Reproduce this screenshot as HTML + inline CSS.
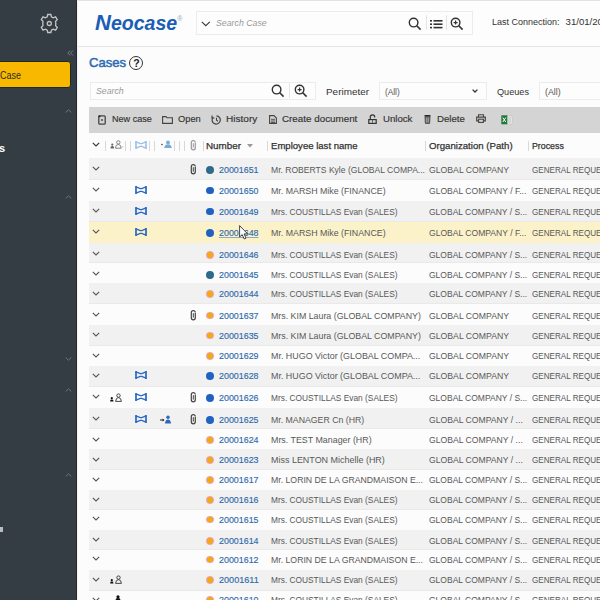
<!DOCTYPE html>
<html><head><meta charset="utf-8">
<style>
*{margin:0;padding:0;box-sizing:border-box}
html,body{width:600px;height:600px;overflow:hidden;background:#fcfcfc;font-family:"Liberation Sans",sans-serif}
#side{position:absolute;left:0;top:0;width:77px;height:600px;background:#353d44;overflow:hidden}
#topbar{position:absolute;left:78px;top:0;width:522px;height:47px;background:#fdfdfd;border-top:1px solid #e2e2e2;border-bottom:1px solid #e4e4e4}
.t{position:absolute;white-space:nowrap;line-height:1;transform-origin:0 0}
.row{position:absolute;left:89px;width:511px}
.rg{background:#f1f1f1;border-bottom:1px solid #e9e9e9}
.rw{background:#fcfcfc}
.ry{background:#fcf2ca}
.ic{position:absolute}
.dot{position:absolute;left:206.4px;width:7.8px;height:7.8px;border-radius:50%}
</style></head><body>
<div id="side">
<svg style="position:absolute;left:39px;top:13px" width="21" height="21" viewBox="0 0 21 21"><g transform="translate(10.3,10.5)" fill="none" stroke="#c4c4c4" stroke-width="1.3">
<path d="M-1.6,-9 L1.6,-9 L2.1,-6.6 L3.9,-5.6 L6.3,-6.6 L8,-3.9 L6.3,-2.2 L6.5,0 L6.3,2.2 L8,3.9 L6.3,6.6 L3.9,5.6 L2.1,6.6 L1.6,9 L-1.6,9 L-2.1,6.6 L-3.9,5.6 L-6.3,6.6 L-8,3.9 L-6.3,2.2 L-6.5,0 L-6.3,-2.2 L-8,-3.9 L-6.3,-6.6 L-3.9,-5.6 L-2.1,-6.6 Z"/>
<circle r="2"/></g></svg>
<svg style="position:absolute;left:67px;top:50px" width="7" height="6" viewBox="0 0 7 6"><path d="M3.2 0.5 L0.8 3 L3.2 5.5 M6 0.5 L3.6 3 L6 5.5" fill="none" stroke="#7d868c" stroke-width="0.9"/></svg>
<div style="position:absolute;left:76px;top:0;width:1px;height:600px;background:#252c31"></div>
<div style="position:absolute;left:-4px;top:61px;width:75px;height:26.5px;background:#f8b800;border:1px solid #1e2a22;border-radius:3px"></div>
<div id="sCase" class="t" style="left:0px;top:69.77px;font-size:11.5px;color:#2a2a2a;transform:scaleX(0.7778);">Case</div>
<svg style="position:absolute;left:65px;top:109px" width="7" height="4" viewBox="0 0 7 4"><path d="M0.7 3.5 L3.5 0.8 L6.3 3.5" fill="none" stroke="#6f777d" stroke-width="1"/></svg>
<div id="sS" class="t" style="left:-1px;top:142.69px;font-size:11px;color:#fff;font-weight:bold">s</div>
<svg style="position:absolute;left:65px;top:195px" width="7" height="4" viewBox="0 0 7 4"><path d="M0.7 3.5 L3.5 0.8 L6.3 3.5" fill="none" stroke="#6f777d" stroke-width="1"/></svg>
<svg style="position:absolute;left:65px;top:357px" width="7" height="4" viewBox="0 0 7 4"><path d="M0.7 0.5 L3.5 3.2 L6.3 0.5" fill="none" stroke="#6f777d" stroke-width="1"/></svg>
<svg style="position:absolute;left:65px;top:388px" width="7" height="4" viewBox="0 0 7 4"><path d="M0.7 3.5 L3.5 0.8 L6.3 3.5" fill="none" stroke="#6f777d" stroke-width="1"/></svg>
<svg style="position:absolute;left:65px;top:473px" width="7" height="4" viewBox="0 0 7 4"><path d="M0.7 3.5 L3.5 0.8 L6.3 3.5" fill="none" stroke="#6f777d" stroke-width="1"/></svg>
<div style="position:absolute;left:0;top:527px;width:3px;height:5px;background:#bbb"></div>
</div>
<div style="position:absolute;left:77px;top:0;width:1px;height:600px;background:#f0f0f0"></div>
<div id="topbar"></div>
<div id="logo" class="t" style="left:94.5px;top:12.09px;font-size:19.5px;color:#1b5eb5;transform:scaleX(1.0024);font-weight:bold;font-style:italic"><span style="font-size:22px">N</span>eocase</div>
<div id="reg" class="t" style="left:177.3px;top:14.57px;font-size:7px;color:#8aa8c8;">®</div>
<div style="position:absolute;left:195.5px;top:11px;width:277px;height:24px;border:1px solid #ececec;background:#fdfdfd"></div>
<svg style="position:absolute;left:201px;top:20.5px" width="10" height="6" viewBox="0 0 10 6"><path d="M0.8 0.8 L4.8 4.6 L8.8 0.8" fill="none" stroke="#3a3a3a" stroke-width="1.15"/></svg>
<div id="scase" class="t" style="left:215.7px;top:19.08px;font-size:9px;color:#999;transform:scaleX(0.9731);font-style:italic">Search Case</div>
<svg style="position:absolute;left:408px;top:17px" width="14" height="14" viewBox="0 0 14 14"><circle cx="5.6" cy="5.6" r="4.3" fill="none" stroke="#333" stroke-width="1.4"/><path d="M8.8 8.8 L12.6 12.6" stroke="#333" stroke-width="1.6"/></svg>
<div style="position:absolute;left:425.5px;top:15px;width:1px;height:15px;background:#e4e4e4"></div>
<svg style="position:absolute;left:430px;top:18.5px" width="13" height="10" viewBox="0 0 13 10"><g fill="#333"><rect x="0" y="1" width="2" height="1.6"/><rect x="0" y="4.4" width="2" height="1.6"/><rect x="0" y="7.8" width="2" height="1.6"/><rect x="3.5" y="1" width="9" height="1.6"/><rect x="3.5" y="4.4" width="9" height="1.6"/><rect x="3.5" y="7.8" width="9" height="1.6"/></g></svg>
<div style="position:absolute;left:445.5px;top:15px;width:1px;height:15px;background:#e4e4e4"></div>
<svg style="position:absolute;left:450px;top:17px" width="14" height="14" viewBox="0 0 14 14"><circle cx="5.6" cy="5.6" r="4.3" fill="none" stroke="#333" stroke-width="1.4"/><path d="M8.8 8.8 L12.6 12.6" stroke="#333" stroke-width="1.6"/><path d="M5.6 3.6 V7.6 M3.6 5.6 H7.6" stroke="#333" stroke-width="1.2"/></svg>
<div id="lastc" class="t" style="left:491.6px;top:16.77px;font-size:9.6px;color:#333;transform:scaleX(0.9361);">Last Connection:</div>
<div id="date" class="t" style="left:565.6px;top:16.77px;font-size:9.6px;color:#333;">31/01/2019 10:20</div>
<div id="cases" class="t" style="left:89.1px;top:57.16px;font-size:12.8px;color:#2d6cb4;transform:scaleX(1.0250);-webkit-text-stroke:0.5px #2d6cb4">Cases</div>
<div style="position:absolute;left:129.4px;top:56px;width:14px;height:14px;border:1px solid #333;border-radius:50%"></div>
<div id="q" class="t" style="left:133.3px;top:58.11px;font-size:10.5px;color:#222;font-weight:bold">?</div>
<div style="position:absolute;left:89.5px;top:81.5px;width:226px;height:18.5px;border:1px solid #ececec;background:#fdfdfd"></div>
<div id="srch" class="t" style="left:96px;top:87.38px;font-size:9px;color:#999;transform:scaleX(0.9724);font-style:italic">Search</div>
<svg style="position:absolute;left:271px;top:84px" width="14" height="14" viewBox="0 0 14 14"><circle cx="5.6" cy="5.6" r="4.3" fill="none" stroke="#333" stroke-width="1.4"/><path d="M8.8 8.8 L12.6 12.6" stroke="#333" stroke-width="1.6"/></svg>
<div style="position:absolute;left:289.0px;top:83px;width:1px;height:15px;background:#e4e4e4"></div>
<svg style="position:absolute;left:294px;top:84px" width="14" height="14" viewBox="0 0 14 14"><circle cx="5.6" cy="5.6" r="4.3" fill="none" stroke="#333" stroke-width="1.4"/><path d="M8.8 8.8 L12.6 12.6" stroke="#333" stroke-width="1.6"/><path d="M5.6 3.6 V7.6 M3.6 5.6 H7.6" stroke="#333" stroke-width="1.2"/></svg>
<div id="perim" class="t" style="left:326px;top:88.13px;font-size:9.3px;color:#333;transform:scaleX(1.0675);">Perimeter</div>
<div style="position:absolute;left:379px;top:81.5px;width:107.5px;height:18px;border:1px solid #ececec;background:#fdfdfd"></div>
<div id="all1" class="t" style="left:384.8px;top:87.88px;font-size:9px;color:#555;transform:scaleX(0.9187);">(All)</div>
<svg style="position:absolute;left:472px;top:88.5px" width="6" height="4" viewBox="0 0 6 4"><path d="M0.6 0.6 L3 3 L5.4 0.6" fill="none" stroke="#333" stroke-width="1.3"/></svg>
<div id="queues" class="t" style="left:496.8px;top:88.13px;font-size:9.3px;color:#333;transform:scaleX(0.9818);">Queues</div>
<div style="position:absolute;left:539.3px;top:81.5px;width:70px;height:18px;border:1px solid #ececec;background:#fdfdfd"></div>
<div id="all2" class="t" style="left:545px;top:87.88px;font-size:9px;color:#555;transform:scaleX(0.9813);">(All)</div>
<div style="position:absolute;left:89px;top:107.2px;width:511px;height:26.1px;background:#d4d4d4"></div>
<svg style="position:absolute;left:98px;top:114.5px" width="8" height="10" viewBox="0 0 8 10"><rect x="0.8" y="0.8" width="6.4" height="8.4" rx="1" fill="none" stroke="#444" stroke-width="1.3"/><circle cx="4" cy="5" r="1.1" fill="#555"/><rect x="0.5" y="0.5" width="2" height="1.6" fill="#222"/></svg>
<div id="tb1" class="t" style="left:112px;top:115.43px;font-size:9.3px;color:#333;transform:scaleX(0.9756);-webkit-text-stroke:0.15px #333">New case</div>
<svg style="position:absolute;left:162px;top:115.5px" width="11" height="8" viewBox="0 0 11 8"><path d="M0.6 0.6 H4 L5 1.8 H10.4 V7.4 H0.6 Z" fill="none" stroke="#444" stroke-width="1.1"/></svg>
<div id="tb2" class="t" style="left:178px;top:115.43px;font-size:9.3px;color:#333;-webkit-text-stroke:0.15px #333">Open</div>
<svg style="position:absolute;left:210.5px;top:114.5px" width="11" height="10" viewBox="0 0 11 10"><path d="M2.2 2.2 A4.1 4.1 0 1 0 5.5 0.9" fill="none" stroke="#444" stroke-width="1.2"/><path d="M5.5 2.8 V5.2 L7 6.2" fill="none" stroke="#444" stroke-width="1.1"/><path d="M1 0.5 V3 H3.4" fill="none" stroke="#444" stroke-width="1.1"/></svg>
<div id="tb3" class="t" style="left:226px;top:115.43px;font-size:9.3px;color:#333;transform:scaleX(1.0828);-webkit-text-stroke:0.15px #333">History</div>
<svg style="position:absolute;left:268.5px;top:115px" width="8" height="9" viewBox="0 0 8 9"><path d="M0.6 0.6 H5 L7.4 3 V8.4 H0.6 Z" fill="none" stroke="#444" stroke-width="1.1"/><path d="M2 4.3 H6 M2 6 H6 M2 7.6 H6" stroke="#444" stroke-width="0.9"/></svg>
<div id="tb4" class="t" style="left:282px;top:115.43px;font-size:9.3px;color:#333;transform:scaleX(1.0563);-webkit-text-stroke:0.15px #333">Create document</div>
<svg style="position:absolute;left:368.3px;top:113.8px" width="9" height="10" viewBox="0 0 9 10"><path d="M2.3 5.6 V3 A2.2 2.2 0 0 1 6.7 3 V3.6" fill="none" stroke="#333" stroke-width="1.2"/><rect x="0.8" y="5.6" width="7.4" height="3.8" fill="none" stroke="#333" stroke-width="1.2"/><path d="M4.5 6.2 V8.8" stroke="#444" stroke-width="0.8"/></svg>
<div id="tb5" class="t" style="left:383px;top:115.43px;font-size:9.3px;color:#333;transform:scaleX(1.0357);-webkit-text-stroke:0.15px #333">Unlock</div>
<svg style="position:absolute;left:424.3px;top:114.8px" width="7" height="9" viewBox="0 0 7 9"><path d="M0.4 1 Q3.5 0 6.6 1" fill="none" stroke="#222" stroke-width="1.3"/><path d="M1 1.6 H6 L5.7 8 Q5.6 8.7 5 8.7 H2 Q1.4 8.7 1.3 8 Z" fill="#666" stroke="#444" stroke-width="0.8"/><path d="M2.7 2.6 V7.6 M4.3 2.6 V7.6" stroke="#ccc" stroke-width="0.6"/></svg>
<div id="tb6" class="t" style="left:437px;top:115.43px;font-size:9.3px;color:#333;transform:scaleX(1.0370);-webkit-text-stroke:0.15px #333">Delete</div>
<svg style="position:absolute;left:475.5px;top:114.3px" width="10" height="9" viewBox="0 0 10 9"><path d="M2.5 3 V0.7 H7.5 V3" fill="none" stroke="#444" stroke-width="1.1"/><path d="M2.2 6.8 H0.7 V3.2 H9.3 V6.8 H7.8" fill="none" stroke="#444" stroke-width="1.2"/><rect x="2.6" y="5.2" width="4.8" height="3.2" fill="none" stroke="#444" stroke-width="1.1"/></svg>
<svg style="position:absolute;left:500.5px;top:114.5px" width="12" height="10" viewBox="0 0 12 10"><rect x="6" y="1" width="5" height="8" fill="#f2f2f2" stroke="#bbb" stroke-width="0.6"/><path d="M7 3 H10 M7 5 H10 M7 7 H10" stroke="#9a9" stroke-width="0.7"/><rect x="0.3" y="0.3" width="6" height="9" fill="#1d7a38"/><path d="M1.8 2.6 L4.8 7 M4.8 2.6 L1.8 7" stroke="#fff" stroke-width="1"/></svg>
<div style="position:absolute;left:89px;top:133.3px;width:511px;height:25px;background:#fcfcfc"></div>
<svg class="ic" style="left:92px;top:142px" width="8" height="5" viewBox="0 0 8 5"><path d="M0.8 0.8 L4 4 L7.2 0.8" fill="none" stroke="#333" stroke-width="1.1"/></svg>
<div style="position:absolute;left:105.0px;top:141px;width:1px;height:9.5px;background:#d8d8d8"></div>
<svg style="position:absolute;left:109.5px;top:139.5px" width="14" height="9" viewBox="0 0 14 9"><circle cx="2.3" cy="4.6" r="1.1" fill="#666"/><path d="M0.6 8.4 V7.4 Q0.6 6 2.3 6 Q4 6 4 7.4 V8.4 Z" fill="#666"/><circle cx="8.3" cy="2.4" r="1.7" fill="none" stroke="#777" stroke-width="0.9"/><path d="M5.4 8.2 Q5.6 4.6 8.3 4.4 Q11 4.6 11.2 8.2 Z" fill="none" stroke="#777" stroke-width="0.9"/><circle cx="12.8" cy="6.8" r="0.5" fill="#999"/></svg>
<div style="position:absolute;left:125.0px;top:141px;width:1px;height:9.5px;background:#d8d8d8"></div>
<div style="position:absolute;left:129.5px;top:141px;width:1px;height:9.5px;background:#d8d8d8"></div>
<svg class="ic" style="left:135px;top:140.5px" width="12" height="8" viewBox="0 0 12 8"><path d="M1 0.9 L5.3 2.6 H6.7 L11 0.9 M1 7.1 L5.3 5.4 H6.7 L11 7.1" fill="none" stroke="#9ac0e8" stroke-width="1.2" stroke-linejoin="round" stroke-linecap="round"/><path d="M1 0.7 V7.3 M11 0.7 V7.3" stroke="#9ac0e8" stroke-width="1.6" stroke-linecap="round"/></svg>
<div style="position:absolute;left:149.0px;top:141px;width:1px;height:9.5px;background:#d8d8d8"></div>
<div style="position:absolute;left:154.3px;top:141px;width:1px;height:9.5px;background:#d8d8d8"></div>
<svg style="position:absolute;left:160px;top:140px" width="12" height="9" viewBox="0 0 12 9"><circle cx="2" cy="4.5" r="0.8" fill="#444"/><circle cx="8" cy="2.4" r="1.9" fill="#7aaad8"/><path d="M4.2 8 Q4.6 4.6 8 4.3 Q11.4 4.6 11.8 8 Z" fill="#7aaad8"/></svg>
<div style="position:absolute;left:173.5px;top:141px;width:1px;height:9.5px;background:#d8d8d8"></div>
<div style="position:absolute;left:178.5px;top:141px;width:1px;height:9.5px;background:#d8d8d8"></div>
<div style="position:absolute;left:183.5px;top:141px;width:1px;height:9.5px;background:#d8d8d8"></div>
<svg class="ic" style="left:189.8px;top:139.5px" width="7" height="11" viewBox="0 0 7 11"><path d="M5.3 3 V7.8 A2 2 0 0 1 1.3 7.8 V2.6 A2 2 0 0 1 5.3 2.6" fill="none" stroke="#999" stroke-width="1.2"/><path d="M3.3 3.2 V7.6" stroke="#999" stroke-width="1"/></svg>
<div style="position:absolute;left:202.5px;top:141px;width:1px;height:9.5px;background:#d8d8d8"></div>
<div id="h1" class="t" style="left:206px;top:141.93px;font-size:9.3px;color:#333;transform:scaleX(1.0606);-webkit-text-stroke:0.25px #333">Number</div>
<svg style="position:absolute;left:247.4px;top:144px" width="6" height="4" viewBox="0 0 6 4"><path d="M0 0 H6 L3 3.5 Z" fill="#999"/></svg>
<div style="position:absolute;left:266.9px;top:141px;width:1px;height:9.5px;background:#d8d8d8"></div>
<div id="h2" class="t" style="left:271.2px;top:141.93px;font-size:9.3px;color:#333;transform:scaleX(1.0286);-webkit-text-stroke:0.25px #333">Employee last name</div>
<div style="position:absolute;left:425.2px;top:141px;width:1px;height:9.5px;background:#d8d8d8"></div>
<div id="h3" class="t" style="left:429.3px;top:141.93px;font-size:9.3px;color:#333;transform:scaleX(1.0370);-webkit-text-stroke:0.25px #333">Organization (Path)</div>
<div style="position:absolute;left:527.8px;top:141px;width:1px;height:9.5px;background:#d8d8d8"></div>
<div id="h4" class="t" style="left:532px;top:141.93px;font-size:9.3px;color:#333;transform:scaleX(0.9471);-webkit-text-stroke:0.25px #333">Process</div>
<div class="row rg" style="top:158.3px;height:21.30px"></div>
<svg class="ic" style="left:92px;top:166.2px" width="8" height="5" viewBox="0 0 8 5"><path d="M0.8 0.8 L4 4 L7.2 0.8" fill="none" stroke="#555" stroke-width="1.1"/></svg>
<svg class="ic" style="left:190px;top:163.9px" width="7" height="11" viewBox="0 0 7 11"><path d="M5.3 3 V7.8 A2 2 0 0 1 1.3 7.8 V2.6 A2 2 0 0 1 5.3 2.6" fill="none" stroke="#444" stroke-width="1.2"/><path d="M3.3 3.2 V7.6" stroke="#444" stroke-width="1"/></svg>
<span class="dot" style="top:165.80px;background:#2f6a8c"></span>
<div id="n0" class="t" style="left:218.7px;top:164.80px;font-size:9.8px;color:#2f6aaa;transform:scaleX(0.9068);-webkit-text-stroke:0.15px #2f6aaa">20001651</div>
<div id="m0" class="t" style="left:271.2px;top:164.80px;font-size:9.8px;color:#585858;transform:scaleX(0.8739);">Mr. ROBERTS Kyle (GLOBAL COMPA...</div>
<div id="o0" class="t" style="left:429.3px;top:164.80px;font-size:9.8px;color:#585858;transform:scaleX(0.8856);">GLOBAL COMPANY</div>
<div id="p0" class="t" style="left:532.3px;top:164.80px;font-size:9.8px;color:#585858;transform:scaleX(0.8262);">GENERAL REQUE</div>
<div class="row rw" style="top:179.6px;height:21.10px"></div>
<svg class="ic" style="left:92px;top:187.0px" width="8" height="5" viewBox="0 0 8 5"><path d="M0.8 0.8 L4 4 L7.2 0.8" fill="none" stroke="#555" stroke-width="1.1"/></svg>
<svg class="ic" style="left:135px;top:185.5px" width="12" height="8" viewBox="0 0 12 8"><path d="M1 0.9 L5.3 2.6 H6.7 L11 0.9 M1 7.1 L5.3 5.4 H6.7 L11 7.1" fill="none" stroke="#2a68c0" stroke-width="1.3" stroke-linejoin="round" stroke-linecap="round"/><path d="M1 0.7 V7.3 M11 0.7 V7.3" stroke="#2a68c0" stroke-width="1.7000000000000002" stroke-linecap="round"/></svg>
<span class="dot" style="top:186.60px;background:#1f62c2"></span>
<div id="n1" class="t" style="left:218.7px;top:185.60px;font-size:9.8px;color:#2f6aaa;transform:scaleX(0.9068);-webkit-text-stroke:0.15px #2f6aaa">20001650</div>
<div id="m1" class="t" style="left:271.2px;top:185.60px;font-size:9.8px;color:#585858;transform:scaleX(0.9000);">Mr. MARSH Mike (FINANCE)</div>
<div id="o1" class="t" style="left:429.3px;top:185.60px;font-size:9.8px;color:#585858;transform:scaleX(0.8739);">GLOBAL COMPANY / F...</div>
<div id="p1" class="t" style="left:532.3px;top:185.60px;font-size:9.8px;color:#585858;transform:scaleX(0.8262);">GENERAL REQUE</div>
<div class="row rg" style="top:200.7px;height:21.30px"></div>
<svg class="ic" style="left:92px;top:208.0px" width="8" height="5" viewBox="0 0 8 5"><path d="M0.8 0.8 L4 4 L7.2 0.8" fill="none" stroke="#555" stroke-width="1.1"/></svg>
<svg class="ic" style="left:135px;top:206.5px" width="12" height="8" viewBox="0 0 12 8"><path d="M1 0.9 L5.3 2.6 H6.7 L11 0.9 M1 7.1 L5.3 5.4 H6.7 L11 7.1" fill="none" stroke="#2a68c0" stroke-width="1.3" stroke-linejoin="round" stroke-linecap="round"/><path d="M1 0.7 V7.3 M11 0.7 V7.3" stroke="#2a68c0" stroke-width="1.7000000000000002" stroke-linecap="round"/></svg>
<span class="dot" style="top:207.60px;background:#1f62c2"></span>
<div id="n2" class="t" style="left:218.7px;top:206.60px;font-size:9.8px;color:#2f6aaa;transform:scaleX(0.9068);-webkit-text-stroke:0.15px #2f6aaa">20001649</div>
<div id="m2" class="t" style="left:271.2px;top:206.60px;font-size:9.8px;color:#585858;transform:scaleX(0.8510);">Mrs. COUSTILLAS Evan (SALES)</div>
<div id="o2" class="t" style="left:429.3px;top:206.60px;font-size:9.8px;color:#585858;transform:scaleX(0.8681);">GLOBAL COMPANY / S...</div>
<div id="p2" class="t" style="left:532.3px;top:206.60px;font-size:9.8px;color:#585858;transform:scaleX(0.8262);">GENERAL REQUE</div>
<div class="row ry" style="top:222px;height:21.00px"></div>
<svg class="ic" style="left:92px;top:229.3px" width="8" height="5" viewBox="0 0 8 5"><path d="M0.8 0.8 L4 4 L7.2 0.8" fill="none" stroke="#555" stroke-width="1.1"/></svg>
<svg class="ic" style="left:135px;top:227.8px" width="12" height="8" viewBox="0 0 12 8"><path d="M1 0.9 L5.3 2.6 H6.7 L11 0.9 M1 7.1 L5.3 5.4 H6.7 L11 7.1" fill="none" stroke="#2a68c0" stroke-width="1.3" stroke-linejoin="round" stroke-linecap="round"/><path d="M1 0.7 V7.3 M11 0.7 V7.3" stroke="#2a68c0" stroke-width="1.7000000000000002" stroke-linecap="round"/></svg>
<span class="dot" style="top:228.90px;background:#1f62c2"></span>
<div id="n3" class="t" style="left:218.7px;top:227.90px;font-size:9.8px;color:#2f6aaa;transform:scaleX(0.9068);text-decoration:underline;text-decoration-color:#8aa8cc;-webkit-text-stroke:0.15px #2f6aaa">20001648</div>
<div id="m3" class="t" style="left:271.2px;top:227.90px;font-size:9.8px;color:#585858;transform:scaleX(0.9000);">Mr. MARSH Mike (FINANCE)</div>
<div id="o3" class="t" style="left:429.3px;top:227.90px;font-size:9.8px;color:#585858;transform:scaleX(0.8739);">GLOBAL COMPANY / F...</div>
<div id="p3" class="t" style="left:532.3px;top:227.90px;font-size:9.8px;color:#585858;transform:scaleX(0.8262);">GENERAL REQUE</div>
<div class="row rg" style="top:243px;height:20.10px"></div>
<svg class="ic" style="left:92px;top:251.3px" width="8" height="5" viewBox="0 0 8 5"><path d="M0.8 0.8 L4 4 L7.2 0.8" fill="none" stroke="#555" stroke-width="1.1"/></svg>
<span class="dot" style="top:250.90px;background:radial-gradient(closest-side,#f6ac00 0,#f4aa10 55%,#e99a80 78%,#f0b8c0 100%)"></span>
<div id="n4" class="t" style="left:218.7px;top:249.90px;font-size:9.8px;color:#2f6aaa;transform:scaleX(0.9068);-webkit-text-stroke:0.15px #2f6aaa">20001646</div>
<div id="m4" class="t" style="left:271.2px;top:249.90px;font-size:9.8px;color:#585858;transform:scaleX(0.8510);">Mrs. COUSTILLAS Evan (SALES)</div>
<div id="o4" class="t" style="left:429.3px;top:249.90px;font-size:9.8px;color:#585858;transform:scaleX(0.8681);">GLOBAL COMPANY / S...</div>
<div id="p4" class="t" style="left:532.3px;top:249.90px;font-size:9.8px;color:#585858;transform:scaleX(0.8262);">GENERAL REQUE</div>
<div class="row rw" style="top:263.1px;height:20.20px"></div>
<svg class="ic" style="left:92px;top:271.3px" width="8" height="5" viewBox="0 0 8 5"><path d="M0.8 0.8 L4 4 L7.2 0.8" fill="none" stroke="#555" stroke-width="1.1"/></svg>
<span class="dot" style="top:270.90px;background:#2f6a8c"></span>
<div id="n5" class="t" style="left:218.7px;top:269.90px;font-size:9.8px;color:#2f6aaa;transform:scaleX(0.9068);-webkit-text-stroke:0.15px #2f6aaa">20001645</div>
<div id="m5" class="t" style="left:271.2px;top:269.90px;font-size:9.8px;color:#585858;transform:scaleX(0.8510);">Mrs. COUSTILLAS Evan (SALES)</div>
<div id="o5" class="t" style="left:429.3px;top:269.90px;font-size:9.8px;color:#585858;transform:scaleX(0.8681);">GLOBAL COMPANY / S...</div>
<div id="p5" class="t" style="left:532.3px;top:269.90px;font-size:9.8px;color:#585858;transform:scaleX(0.8262);">GENERAL REQUE</div>
<div class="row rg" style="top:283.3px;height:21.10px"></div>
<svg class="ic" style="left:92px;top:290.8px" width="8" height="5" viewBox="0 0 8 5"><path d="M0.8 0.8 L4 4 L7.2 0.8" fill="none" stroke="#555" stroke-width="1.1"/></svg>
<span class="dot" style="top:290.40px;background:radial-gradient(closest-side,#f6ac00 0,#f4aa10 55%,#e99a80 78%,#f0b8c0 100%)"></span>
<div id="n6" class="t" style="left:218.7px;top:289.40px;font-size:9.8px;color:#2f6aaa;transform:scaleX(0.9068);-webkit-text-stroke:0.15px #2f6aaa">20001644</div>
<div id="m6" class="t" style="left:271.2px;top:289.40px;font-size:9.8px;color:#585858;transform:scaleX(0.8510);">Mrs. COUSTILLAS Evan (SALES)</div>
<div id="o6" class="t" style="left:429.3px;top:289.40px;font-size:9.8px;color:#585858;transform:scaleX(0.8681);">GLOBAL COMPANY / S...</div>
<div id="p6" class="t" style="left:532.3px;top:289.40px;font-size:9.8px;color:#585858;transform:scaleX(0.8262);">GENERAL REQUE</div>
<div class="row rw" style="top:304.4px;height:20.20px"></div>
<svg class="ic" style="left:92px;top:312.0px" width="8" height="5" viewBox="0 0 8 5"><path d="M0.8 0.8 L4 4 L7.2 0.8" fill="none" stroke="#555" stroke-width="1.1"/></svg>
<svg class="ic" style="left:190px;top:309.7px" width="7" height="11" viewBox="0 0 7 11"><path d="M5.3 3 V7.8 A2 2 0 0 1 1.3 7.8 V2.6 A2 2 0 0 1 5.3 2.6" fill="none" stroke="#444" stroke-width="1.2"/><path d="M3.3 3.2 V7.6" stroke="#444" stroke-width="1"/></svg>
<span class="dot" style="top:311.60px;background:radial-gradient(closest-side,#f6ac00 0,#f4aa10 55%,#e99a80 78%,#f0b8c0 100%)"></span>
<div id="n7" class="t" style="left:218.7px;top:310.60px;font-size:9.8px;color:#2f6aaa;transform:scaleX(0.9068);-webkit-text-stroke:0.15px #2f6aaa">20001637</div>
<div id="m7" class="t" style="left:271.2px;top:310.60px;font-size:9.8px;color:#585858;transform:scaleX(0.9000);">Mrs. KIM Laura (GLOBAL COMPANY)</div>
<div id="o7" class="t" style="left:429.3px;top:310.60px;font-size:9.8px;color:#585858;transform:scaleX(0.8856);">GLOBAL COMPANY</div>
<div id="p7" class="t" style="left:532.3px;top:310.60px;font-size:9.8px;color:#585858;transform:scaleX(0.8262);">GENERAL REQUE</div>
<div class="row rg" style="top:324.6px;height:21.10px"></div>
<svg class="ic" style="left:92px;top:332.0px" width="8" height="5" viewBox="0 0 8 5"><path d="M0.8 0.8 L4 4 L7.2 0.8" fill="none" stroke="#555" stroke-width="1.1"/></svg>
<span class="dot" style="top:331.60px;background:radial-gradient(closest-side,#f6ac00 0,#f4aa10 55%,#e99a80 78%,#f0b8c0 100%)"></span>
<div id="n8" class="t" style="left:218.7px;top:330.60px;font-size:9.8px;color:#2f6aaa;transform:scaleX(0.9068);-webkit-text-stroke:0.15px #2f6aaa">20001635</div>
<div id="m8" class="t" style="left:271.2px;top:330.60px;font-size:9.8px;color:#585858;transform:scaleX(0.9000);">Mrs. KIM Laura (GLOBAL COMPANY)</div>
<div id="o8" class="t" style="left:429.3px;top:330.60px;font-size:9.8px;color:#585858;transform:scaleX(0.8856);">GLOBAL COMPANY</div>
<div id="p8" class="t" style="left:532.3px;top:330.60px;font-size:9.8px;color:#585858;transform:scaleX(0.8262);">GENERAL REQUE</div>
<div class="row rw" style="top:345.7px;height:20.20px"></div>
<svg class="ic" style="left:92px;top:352.6px" width="8" height="5" viewBox="0 0 8 5"><path d="M0.8 0.8 L4 4 L7.2 0.8" fill="none" stroke="#555" stroke-width="1.1"/></svg>
<span class="dot" style="top:352.20px;background:radial-gradient(closest-side,#f6ac00 0,#f4aa10 55%,#e99a80 78%,#f0b8c0 100%)"></span>
<div id="n9" class="t" style="left:218.7px;top:351.20px;font-size:9.8px;color:#2f6aaa;transform:scaleX(0.9068);-webkit-text-stroke:0.15px #2f6aaa">20001629</div>
<div id="m9" class="t" style="left:271.2px;top:351.20px;font-size:9.8px;color:#585858;transform:scaleX(0.9091);">Mr. HUGO Victor (GLOBAL COMPA...</div>
<div id="o9" class="t" style="left:429.3px;top:351.20px;font-size:9.8px;color:#585858;transform:scaleX(0.8856);">GLOBAL COMPANY</div>
<div id="p9" class="t" style="left:532.3px;top:351.20px;font-size:9.8px;color:#585858;transform:scaleX(0.8262);">GENERAL REQUE</div>
<div class="row rg" style="top:365.9px;height:21.10px"></div>
<svg class="ic" style="left:92px;top:372.5px" width="8" height="5" viewBox="0 0 8 5"><path d="M0.8 0.8 L4 4 L7.2 0.8" fill="none" stroke="#555" stroke-width="1.1"/></svg>
<svg class="ic" style="left:135px;top:371.0px" width="12" height="8" viewBox="0 0 12 8"><path d="M1 0.9 L5.3 2.6 H6.7 L11 0.9 M1 7.1 L5.3 5.4 H6.7 L11 7.1" fill="none" stroke="#2a68c0" stroke-width="1.3" stroke-linejoin="round" stroke-linecap="round"/><path d="M1 0.7 V7.3 M11 0.7 V7.3" stroke="#2a68c0" stroke-width="1.7000000000000002" stroke-linecap="round"/></svg>
<span class="dot" style="top:372.10px;background:#1f62c2"></span>
<div id="n10" class="t" style="left:218.7px;top:371.10px;font-size:9.8px;color:#2f6aaa;transform:scaleX(0.9068);-webkit-text-stroke:0.15px #2f6aaa">20001628</div>
<div id="m10" class="t" style="left:271.2px;top:371.10px;font-size:9.8px;color:#585858;transform:scaleX(0.9091);">Mr. HUGO Victor (GLOBAL COMPA...</div>
<div id="o10" class="t" style="left:429.3px;top:371.10px;font-size:9.8px;color:#585858;transform:scaleX(0.8856);">GLOBAL COMPANY</div>
<div id="p10" class="t" style="left:532.3px;top:371.10px;font-size:9.8px;color:#585858;transform:scaleX(0.8262);">GENERAL REQUE</div>
<div class="row rw" style="top:387px;height:21.20px"></div>
<svg class="ic" style="left:92px;top:394.3px" width="8" height="5" viewBox="0 0 8 5"><path d="M0.8 0.8 L4 4 L7.2 0.8" fill="none" stroke="#555" stroke-width="1.1"/></svg>
<svg class="ic" style="left:110px;top:392.8px" width="13" height="9" viewBox="0 0 13 9"><circle cx="1.8" cy="5.2" r="1.1" fill="#111"/><path d="M0.2 8.6 V7.8 Q0.2 6.5 1.8 6.5 Q3.4 6.5 3.4 7.8 V8.6 Z" fill="#111"/><circle cx="8.5" cy="2.6" r="1.7" fill="none" stroke="#333" stroke-width="0.9"/><path d="M5.6 8.4 Q5.8 4.8 8.5 4.6 Q11.2 4.8 11.4 8.4 Z" fill="none" stroke="#333" stroke-width="0.9"/></svg>
<svg class="ic" style="left:135px;top:392.8px" width="12" height="8" viewBox="0 0 12 8"><path d="M1 0.9 L5.3 2.6 H6.7 L11 0.9 M1 7.1 L5.3 5.4 H6.7 L11 7.1" fill="none" stroke="#2a68c0" stroke-width="1.3" stroke-linejoin="round" stroke-linecap="round"/><path d="M1 0.7 V7.3 M11 0.7 V7.3" stroke="#2a68c0" stroke-width="1.7000000000000002" stroke-linecap="round"/></svg>
<svg class="ic" style="left:190px;top:392.0px" width="7" height="11" viewBox="0 0 7 11"><path d="M5.3 3 V7.8 A2 2 0 0 1 1.3 7.8 V2.6 A2 2 0 0 1 5.3 2.6" fill="none" stroke="#444" stroke-width="1.2"/><path d="M3.3 3.2 V7.6" stroke="#444" stroke-width="1"/></svg>
<span class="dot" style="top:393.90px;background:#1f62c2"></span>
<div id="n11" class="t" style="left:218.7px;top:392.90px;font-size:9.8px;color:#2f6aaa;transform:scaleX(0.9068);-webkit-text-stroke:0.15px #2f6aaa">20001626</div>
<div id="m11" class="t" style="left:271.2px;top:392.90px;font-size:9.8px;color:#585858;transform:scaleX(0.8510);">Mrs. COUSTILLAS Evan (SALES)</div>
<div id="o11" class="t" style="left:429.3px;top:392.90px;font-size:9.8px;color:#585858;transform:scaleX(0.8681);">GLOBAL COMPANY / S...</div>
<div id="p11" class="t" style="left:532.3px;top:392.90px;font-size:9.8px;color:#585858;transform:scaleX(0.8262);">GENERAL REQUE</div>
<div class="row rg" style="top:408.2px;height:20.90px"></div>
<svg class="ic" style="left:92px;top:416.3px" width="8" height="5" viewBox="0 0 8 5"><path d="M0.8 0.8 L4 4 L7.2 0.8" fill="none" stroke="#555" stroke-width="1.1"/></svg>
<svg class="ic" style="left:135px;top:414.8px" width="12" height="8" viewBox="0 0 12 8"><path d="M1 0.9 L5.3 2.6 H6.7 L11 0.9 M1 7.1 L5.3 5.4 H6.7 L11 7.1" fill="none" stroke="#2a68c0" stroke-width="1.3" stroke-linejoin="round" stroke-linecap="round"/><path d="M1 0.7 V7.3 M11 0.7 V7.3" stroke="#2a68c0" stroke-width="1.7000000000000002" stroke-linecap="round"/></svg>
<svg class="ic" style="left:160px;top:414.8px" width="12" height="9" viewBox="0 0 12 9"><path d="M0 5 H3.5" stroke="#222" stroke-width="1"/><path d="M2.6 3.4 L4.4 5 L2.6 6.6 Z" fill="#222"/><circle cx="8" cy="2.3" r="1.7" fill="#2a68c0"/><path d="M5 8.5 Q5.3 4.8 8 4.5 Q10.7 4.8 11 8.5 Z" fill="#2a68c0"/></svg>
<svg class="ic" style="left:190px;top:414.0px" width="7" height="11" viewBox="0 0 7 11"><path d="M5.3 3 V7.8 A2 2 0 0 1 1.3 7.8 V2.6 A2 2 0 0 1 5.3 2.6" fill="none" stroke="#444" stroke-width="1.2"/><path d="M3.3 3.2 V7.6" stroke="#444" stroke-width="1"/></svg>
<span class="dot" style="top:415.90px;background:#1f62c2"></span>
<div id="n12" class="t" style="left:218.7px;top:414.90px;font-size:9.8px;color:#2f6aaa;transform:scaleX(0.9068);-webkit-text-stroke:0.15px #2f6aaa">20001625</div>
<div id="m12" class="t" style="left:271.2px;top:414.90px;font-size:9.8px;color:#585858;transform:scaleX(0.8914);">Mr. MANAGER Cn (HR)</div>
<div id="o12" class="t" style="left:429.3px;top:414.90px;font-size:9.8px;color:#585858;transform:scaleX(0.8804);">GLOBAL COMPANY / ...</div>
<div id="p12" class="t" style="left:532.3px;top:414.90px;font-size:9.8px;color:#585858;transform:scaleX(0.8262);">GENERAL REQUE</div>
<div class="row rw" style="top:429.1px;height:19.90px"></div>
<svg class="ic" style="left:92px;top:436.5px" width="8" height="5" viewBox="0 0 8 5"><path d="M0.8 0.8 L4 4 L7.2 0.8" fill="none" stroke="#555" stroke-width="1.1"/></svg>
<span class="dot" style="top:436.10px;background:radial-gradient(closest-side,#f6ac00 0,#f4aa10 55%,#e99a80 78%,#f0b8c0 100%)"></span>
<div id="n13" class="t" style="left:218.7px;top:435.10px;font-size:9.8px;color:#2f6aaa;transform:scaleX(0.9068);-webkit-text-stroke:0.15px #2f6aaa">20001624</div>
<div id="m13" class="t" style="left:271.2px;top:435.10px;font-size:9.8px;color:#585858;transform:scaleX(0.9045);">Mrs. TEST Manager (HR)</div>
<div id="o13" class="t" style="left:429.3px;top:435.10px;font-size:9.8px;color:#585858;transform:scaleX(0.8804);">GLOBAL COMPANY / ...</div>
<div id="p13" class="t" style="left:532.3px;top:435.10px;font-size:9.8px;color:#585858;transform:scaleX(0.8262);">GENERAL REQUE</div>
<div class="row rg" style="top:449px;height:21.00px"></div>
<svg class="ic" style="left:92px;top:456.5px" width="8" height="5" viewBox="0 0 8 5"><path d="M0.8 0.8 L4 4 L7.2 0.8" fill="none" stroke="#555" stroke-width="1.1"/></svg>
<span class="dot" style="top:456.10px;background:radial-gradient(closest-side,#f6ac00 0,#f4aa10 55%,#e99a80 78%,#f0b8c0 100%)"></span>
<div id="n14" class="t" style="left:218.7px;top:455.10px;font-size:9.8px;color:#2f6aaa;transform:scaleX(0.9068);-webkit-text-stroke:0.15px #2f6aaa">20001623</div>
<div id="m14" class="t" style="left:271.2px;top:455.10px;font-size:9.8px;color:#585858;transform:scaleX(0.9145);">Miss LENTON Michelle (HR)</div>
<div id="o14" class="t" style="left:429.3px;top:455.10px;font-size:9.8px;color:#585858;transform:scaleX(0.8804);">GLOBAL COMPANY / ...</div>
<div id="p14" class="t" style="left:532.3px;top:455.10px;font-size:9.8px;color:#585858;transform:scaleX(0.8262);">GENERAL REQUE</div>
<div class="row rw" style="top:470px;height:19.70px"></div>
<svg class="ic" style="left:92px;top:476.5px" width="8" height="5" viewBox="0 0 8 5"><path d="M0.8 0.8 L4 4 L7.2 0.8" fill="none" stroke="#555" stroke-width="1.1"/></svg>
<span class="dot" style="top:476.10px;background:radial-gradient(closest-side,#f6ac00 0,#f4aa10 55%,#e99a80 78%,#f0b8c0 100%)"></span>
<div id="n15" class="t" style="left:218.7px;top:475.10px;font-size:9.8px;color:#2f6aaa;transform:scaleX(0.9068);-webkit-text-stroke:0.15px #2f6aaa">20001617</div>
<div id="m15" class="t" style="left:271.2px;top:475.10px;font-size:9.8px;color:#585858;transform:scaleX(0.8889);">Mr. LORIN DE LA GRANDMAISON E...</div>
<div id="o15" class="t" style="left:429.3px;top:475.10px;font-size:9.8px;color:#585858;transform:scaleX(0.8681);">GLOBAL COMPANY / S...</div>
<div id="p15" class="t" style="left:532.3px;top:475.10px;font-size:9.8px;color:#585858;transform:scaleX(0.8262);">GENERAL REQUE</div>
<div class="row rg" style="top:489.7px;height:20.30px"></div>
<svg class="ic" style="left:92px;top:496.8px" width="8" height="5" viewBox="0 0 8 5"><path d="M0.8 0.8 L4 4 L7.2 0.8" fill="none" stroke="#555" stroke-width="1.1"/></svg>
<span class="dot" style="top:496.40px;background:radial-gradient(closest-side,#f6ac00 0,#f4aa10 55%,#e99a80 78%,#f0b8c0 100%)"></span>
<div id="n16" class="t" style="left:218.7px;top:495.40px;font-size:9.8px;color:#2f6aaa;transform:scaleX(0.9068);-webkit-text-stroke:0.15px #2f6aaa">20001616</div>
<div id="m16" class="t" style="left:271.2px;top:495.40px;font-size:9.8px;color:#585858;transform:scaleX(0.8510);">Mrs. COUSTILLAS Evan (SALES)</div>
<div id="o16" class="t" style="left:429.3px;top:495.40px;font-size:9.8px;color:#585858;transform:scaleX(0.8681);">GLOBAL COMPANY / S...</div>
<div id="p16" class="t" style="left:532.3px;top:495.40px;font-size:9.8px;color:#585858;transform:scaleX(0.8262);">GENERAL REQUE</div>
<div class="row rw" style="top:510px;height:19.60px"></div>
<svg class="ic" style="left:92px;top:516.0px" width="8" height="5" viewBox="0 0 8 5"><path d="M0.8 0.8 L4 4 L7.2 0.8" fill="none" stroke="#555" stroke-width="1.1"/></svg>
<span class="dot" style="top:515.60px;background:radial-gradient(closest-side,#f6ac00 0,#f4aa10 55%,#e99a80 78%,#f0b8c0 100%)"></span>
<div id="n17" class="t" style="left:218.7px;top:514.60px;font-size:9.8px;color:#2f6aaa;transform:scaleX(0.9068);-webkit-text-stroke:0.15px #2f6aaa">20001615</div>
<div id="m17" class="t" style="left:271.2px;top:514.60px;font-size:9.8px;color:#585858;transform:scaleX(0.8510);">Mrs. COUSTILLAS Evan (SALES)</div>
<div id="o17" class="t" style="left:429.3px;top:514.60px;font-size:9.8px;color:#585858;transform:scaleX(0.8681);">GLOBAL COMPANY / S...</div>
<div id="p17" class="t" style="left:532.3px;top:514.60px;font-size:9.8px;color:#585858;transform:scaleX(0.8262);">GENERAL REQUE</div>
<div class="row rg" style="top:529.6px;height:20.40px"></div>
<svg class="ic" style="left:92px;top:537.3px" width="8" height="5" viewBox="0 0 8 5"><path d="M0.8 0.8 L4 4 L7.2 0.8" fill="none" stroke="#555" stroke-width="1.1"/></svg>
<span class="dot" style="top:536.90px;background:radial-gradient(closest-side,#f6ac00 0,#f4aa10 55%,#e99a80 78%,#f0b8c0 100%)"></span>
<div id="n18" class="t" style="left:218.7px;top:535.90px;font-size:9.8px;color:#2f6aaa;transform:scaleX(0.9068);-webkit-text-stroke:0.15px #2f6aaa">20001614</div>
<div id="m18" class="t" style="left:271.2px;top:535.90px;font-size:9.8px;color:#585858;transform:scaleX(0.8510);">Mrs. COUSTILLAS Evan (SALES)</div>
<div id="o18" class="t" style="left:429.3px;top:535.90px;font-size:9.8px;color:#585858;transform:scaleX(0.8681);">GLOBAL COMPANY / S...</div>
<div id="p18" class="t" style="left:532.3px;top:535.90px;font-size:9.8px;color:#585858;transform:scaleX(0.8262);">GENERAL REQUE</div>
<div class="row rw" style="top:550px;height:20.00px"></div>
<svg class="ic" style="left:92px;top:556.0px" width="8" height="5" viewBox="0 0 8 5"><path d="M0.8 0.8 L4 4 L7.2 0.8" fill="none" stroke="#555" stroke-width="1.1"/></svg>
<span class="dot" style="top:555.60px;background:radial-gradient(closest-side,#f6ac00 0,#f4aa10 55%,#e99a80 78%,#f0b8c0 100%)"></span>
<div id="n19" class="t" style="left:218.7px;top:554.60px;font-size:9.8px;color:#2f6aaa;transform:scaleX(0.9068);-webkit-text-stroke:0.15px #2f6aaa">20001612</div>
<div id="m19" class="t" style="left:271.2px;top:554.60px;font-size:9.8px;color:#585858;transform:scaleX(0.8889);">Mr. LORIN DE LA GRANDMAISON E...</div>
<div id="o19" class="t" style="left:429.3px;top:554.60px;font-size:9.8px;color:#585858;transform:scaleX(0.8681);">GLOBAL COMPANY / S...</div>
<div id="p19" class="t" style="left:532.3px;top:554.60px;font-size:9.8px;color:#585858;transform:scaleX(0.8262);">GENERAL REQUE</div>
<div class="row rg" style="top:570px;height:20.70px"></div>
<svg class="ic" style="left:92px;top:576.6px" width="8" height="5" viewBox="0 0 8 5"><path d="M0.8 0.8 L4 4 L7.2 0.8" fill="none" stroke="#555" stroke-width="1.1"/></svg>
<svg class="ic" style="left:110px;top:575.1px" width="13" height="9" viewBox="0 0 13 9"><circle cx="1.8" cy="5.2" r="1.1" fill="#111"/><path d="M0.2 8.6 V7.8 Q0.2 6.5 1.8 6.5 Q3.4 6.5 3.4 7.8 V8.6 Z" fill="#111"/><circle cx="8.5" cy="2.6" r="1.7" fill="none" stroke="#333" stroke-width="0.9"/><path d="M5.6 8.4 Q5.8 4.8 8.5 4.6 Q11.2 4.8 11.4 8.4 Z" fill="none" stroke="#333" stroke-width="0.9"/></svg>
<span class="dot" style="top:576.20px;background:radial-gradient(closest-side,#f6ac00 0,#f4aa10 55%,#e99a80 78%,#f0b8c0 100%)"></span>
<div id="n20" class="t" style="left:218.7px;top:575.20px;font-size:9.8px;color:#2f6aaa;transform:scaleX(0.9279);-webkit-text-stroke:0.15px #2f6aaa">20001611</div>
<div id="m20" class="t" style="left:271.2px;top:575.20px;font-size:9.8px;color:#585858;transform:scaleX(0.8510);">Mrs. COUSTILLAS Evan (SALES)</div>
<div id="o20" class="t" style="left:429.3px;top:575.20px;font-size:9.8px;color:#585858;transform:scaleX(0.8681);">GLOBAL COMPANY / S...</div>
<div id="p20" class="t" style="left:532.3px;top:575.20px;font-size:9.8px;color:#585858;transform:scaleX(0.8262);">GENERAL REQUE</div>
<div class="row rw" style="top:590.7px;height:20.30px"></div>
<svg class="ic" style="left:92px;top:596.6px" width="8" height="5" viewBox="0 0 8 5"><path d="M0.8 0.8 L4 4 L7.2 0.8" fill="none" stroke="#555" stroke-width="1.1"/></svg>
<svg class="ic" style="left:110px;top:595.1px" width="13" height="9" viewBox="0 0 13 9"><path d="M0.3 8.5 V7.3 Q0.3 5.6 2.1 5.6 Q3.9 5.6 3.9 7.3 V8.5 Z" fill="#111"/><path d="M5.5 9 V5 Q5.5 3 8 3 Q10.5 3 10.5 5 V9 Z" fill="#111"/><circle cx="8" cy="1.8" r="1.6" fill="#111"/></svg>
<span class="dot" style="top:596.20px;background:radial-gradient(closest-side,#f6ac00 0,#f4aa10 55%,#e99a80 78%,#f0b8c0 100%)"></span>
<div id="n21" class="t" style="left:218.7px;top:595.20px;font-size:9.8px;color:#2f6aaa;transform:scaleX(0.9068);-webkit-text-stroke:0.15px #2f6aaa">20001610</div>
<div id="m21" class="t" style="left:271.2px;top:595.20px;font-size:9.8px;color:#585858;transform:scaleX(0.8510);">Mrs. COUSTILLAS Evan (SALES)</div>
<div id="o21" class="t" style="left:429.3px;top:595.20px;font-size:9.8px;color:#585858;transform:scaleX(0.8681);">GLOBAL COMPANY / S...</div>
<div id="p21" class="t" style="left:532.3px;top:595.20px;font-size:9.8px;color:#585858;transform:scaleX(0.8262);">GENERAL REQUE</div>
<svg style="position:absolute;left:239px;top:224.5px" width="10" height="15" viewBox="0 0 10 15"><path d="M0.6 0.6 V12 L3.2 9.6 L5.2 14 L7 13.2 L5.1 8.9 L8.6 8.9 Z" fill="#fff" stroke="#333" stroke-width="0.9" stroke-linejoin="round"/></svg>
</body></html>
